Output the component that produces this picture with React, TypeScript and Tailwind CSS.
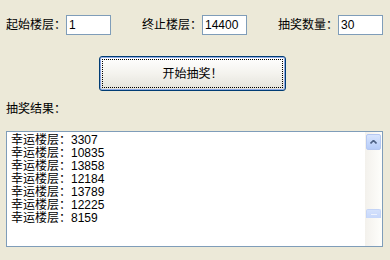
const font = "font-['Liberation_Sans','Noto_Sans_CJK_SC',sans-serif]";

const results = [3307, 10835, 13858, 12184, 13789, 12225, 8159];

function Field({ label, value }: { label: string; value: string }) {
  return (
    <div className="flex items-center h-[20px]">
      <span className="w-[60px] leading-[20px] text-[12px]">{label}</span>
      <div className="w-[45px] h-[20px] bg-white border border-[#7F9DB9] px-[2px] leading-[18px] text-[12px]">
        {value}
      </div>
    </div>
  );
}

function ScrollBar() {
  return (
    <div className="w-[17px] h-full bg-gradient-to-r from-[#F3F1EC] to-[#FEFEFB] flex flex-col items-center pt-[2px]">
      <div className="w-[15px] h-[16px] rounded-[2px] border border-[#B5C8F2] bg-gradient-to-b from-[#D8E5FD] to-[#B6CCF9] flex items-center justify-center">
        <svg width="7" height="4" viewBox="0 0 7 4">
          <path d="M0.5 3.5 L3.5 0.5 L6.5 3.5" fill="none" stroke="#4D6185" strokeWidth="1.6" />
        </svg>
      </div>
      <div className="flex-1" />
      <div className="w-[15px] h-[9px] rounded-t-[2px] border border-b-0 border-[#C4D4F6] bg-gradient-to-b from-[#D5E2FC] to-[#C6D7FB] flex justify-center pt-[4px] mb-[28px]">
        <div className="w-[6px] h-[1px] bg-[#EEF3FE]" />
      </div>
    </div>
  );
}

export default function App() {
  return (
    <div className={`w-[390px] h-[260px] bg-[#ECE9D8] text-black pl-[6px] pt-[15px] ${font}`}>
      <div className="flex gap-[31px]">
        <Field label="起始楼层：" value="1" />
        <Field label="终止楼层：" value="14400" />
        <Field label="抽奖数量：" value="30" />
      </div>

      <button className="mt-[21px] ml-[93px] w-[187px] h-[35px] rounded-[3px] border border-[#003C74] bg-gradient-to-b from-[#FFFFFF] via-[#F4F3EE] to-[#E3E2DA] shadow-[inset_0_0_0_1px_#8FA9E4] outline-1 outline-dotted outline-black outline-offset-[-4px] text-[12px] leading-[14px]">
        开始抽奖！
      </button>

      <div className="mt-[11px] h-[14px] leading-[14px] text-[12px]">抽奖结果：</div>

      <div className="mt-[15px] w-[377px] h-[116px] bg-white border border-[#7F9DB9] flex">
        <div className="flex-1 pl-[4px] pt-[2px] text-[12px] leading-[13px]">
          {results.map((n) => (
            <div key={n}>幸运楼层：{n}</div>
          ))}
        </div>
        <ScrollBar />
      </div>
    </div>
  );
}
